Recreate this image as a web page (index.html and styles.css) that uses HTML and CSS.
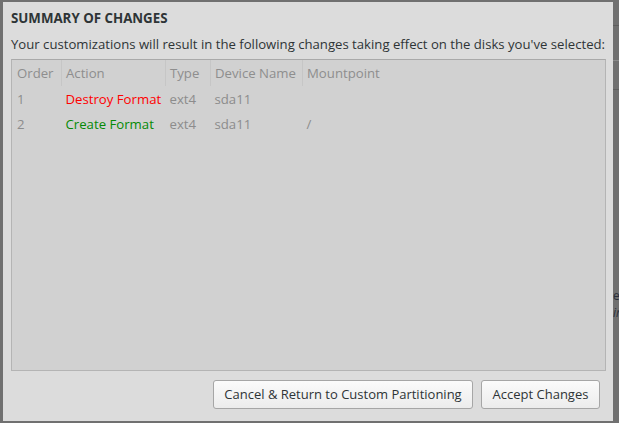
FILE: index.html
```html
<!DOCTYPE html>
<html>
<head>
<meta charset="utf-8">
<link rel="stylesheet" href="styles.css">
</head>
<body>
<div class="desktop">
  <div class="bg-lines">
    <div class="bg-line l1"></div>
    <div class="bg-line l2"></div>
    <div class="bg-line l3"></div>
    <div class="bg-text t1">e:</div>
    <div class="bg-text t2">ir</div>
  </div>
  <div class="dialog">
    <div class="title">SUMMARY OF CHANGES</div>
    <div class="desc">Your customizations will result in the following changes taking effect on the disks you've selected:</div>
    <div class="table-box">
      <table class="changes">
        <thead>
          <tr>
            <th class="c-order">Order</th>
            <th class="c-action">Action</th>
            <th class="c-type">Type</th>
            <th class="c-dev">Device Name</th>
            <th class="c-mount">Mountpoint</th>
          </tr>
        </thead>
        <tbody>
          <tr>
            <td>1</td>
            <td class="destroy">Destroy Format</td>
            <td>ext4</td>
            <td>sda11</td>
            <td></td>
          </tr>
          <tr>
            <td>2</td>
            <td class="create">Create Format</td>
            <td>ext4</td>
            <td>sda11</td>
            <td>/</td>
          </tr>
        </tbody>
      </table>
    </div>
    <div class="buttons">
      <button class="btn btn-cancel">Cancel &amp; Return to Custom Partitioning</button>
      <button class="btn btn-accept">Accept Changes</button>
    </div>
  </div>
</div>
</body>
</html>
```

FILE: styles.css
```css
html, body {
  margin: 0;
  padding: 0;
}
body {
  width: 619px;
  height: 423px;
  overflow: hidden;
  background: #707070;
  font-family: "Open Sans", "Noto Sans", sans-serif;
}
.desktop {
  position: relative;
  width: 619px;
  height: 423px;
  padding: 2px 0 0 3px;
  box-sizing: border-box;
}
.bg-lines {
  position: absolute;
  right: 0;
  top: 0;
  width: 6px;
  height: 423px;
  overflow: hidden;
}
.bg-line {
  position: absolute;
  left: 0;
  width: 6px;
  height: 1px;
  background: #5e5e5e;
}
.l1 { top: 25px; }
.l2 { top: 60px; background: #8a8a8a; }
.l3 { top: 89px; }
.bg-text {
  position: absolute;
  left: 0;
  font-size: 12px;
  color: #2a2f3a;
}
.t1 { top: 287px; }
.t2 { top: 304px; font-style: italic; }
.dialog {
  width: 610px;
  height: 419px;
  background: #dcdcdc;
  box-sizing: border-box;
  padding: 8px 7px 0 8px;
  display: flex;
  flex-direction: column;
}
.title {
  font-weight: bold;
  font-size: 13.3px;
  color: #2e3436;
  line-height: 17px;
  margin-bottom: 8px;
}
.desc {
  font-size: 13.15px;
  color: #2e3436;
  line-height: 18px;
  white-space: nowrap;
  margin-bottom: 6px;
}
.table-box {
  height: 312px;
  box-sizing: border-box;
  border: 1px solid #b4b4b4;
  border-top-color: #a9a9a9;
  background: #d1d1d1;
}
.changes {
  border-collapse: collapse;
  table-layout: fixed;
  font-size: 13.2px;
  color: #8c8c8c;
}
.changes th {
  font-weight: normal;
  text-align: left;
  height: 26px;
  padding: 0 4px;
  border-left: 1px solid #c6c6c6;
  color: #8e8e8e;
  white-space: nowrap;
}
.changes th:first-child,
.changes td:first-child {
  border-left: none;
  padding-left: 5px;
}
.changes td {
  height: 25px;
  padding: 0 4px;
  white-space: nowrap;
}
.c-order { width: 40px; }
.c-action { width: 95px; }
.c-type { width: 36px; }
.c-dev { width: 83px; }
.c-mount { width: 120px; }
.destroy { color: #ff0000; }
.create { color: #058a05; }
.buttons {
  display: flex;
  justify-content: flex-end;
  gap: 8px;
  margin-top: 9px;
  padding-right: 6px;
}
.btn {
  height: 29px;
  box-sizing: border-box;
  border: 1px solid #a6a6a6;
  border-radius: 3px;
  background: linear-gradient(#fbfbfb, #ececec);
  font-family: "Open Sans", "Noto Sans", sans-serif;
  font-size: 13px;
  color: #2e3436;
  padding: 0 0 2px;
  white-space: nowrap;
}
.btn-cancel { width: 260px; }
.btn-accept { width: 119px; }
```
